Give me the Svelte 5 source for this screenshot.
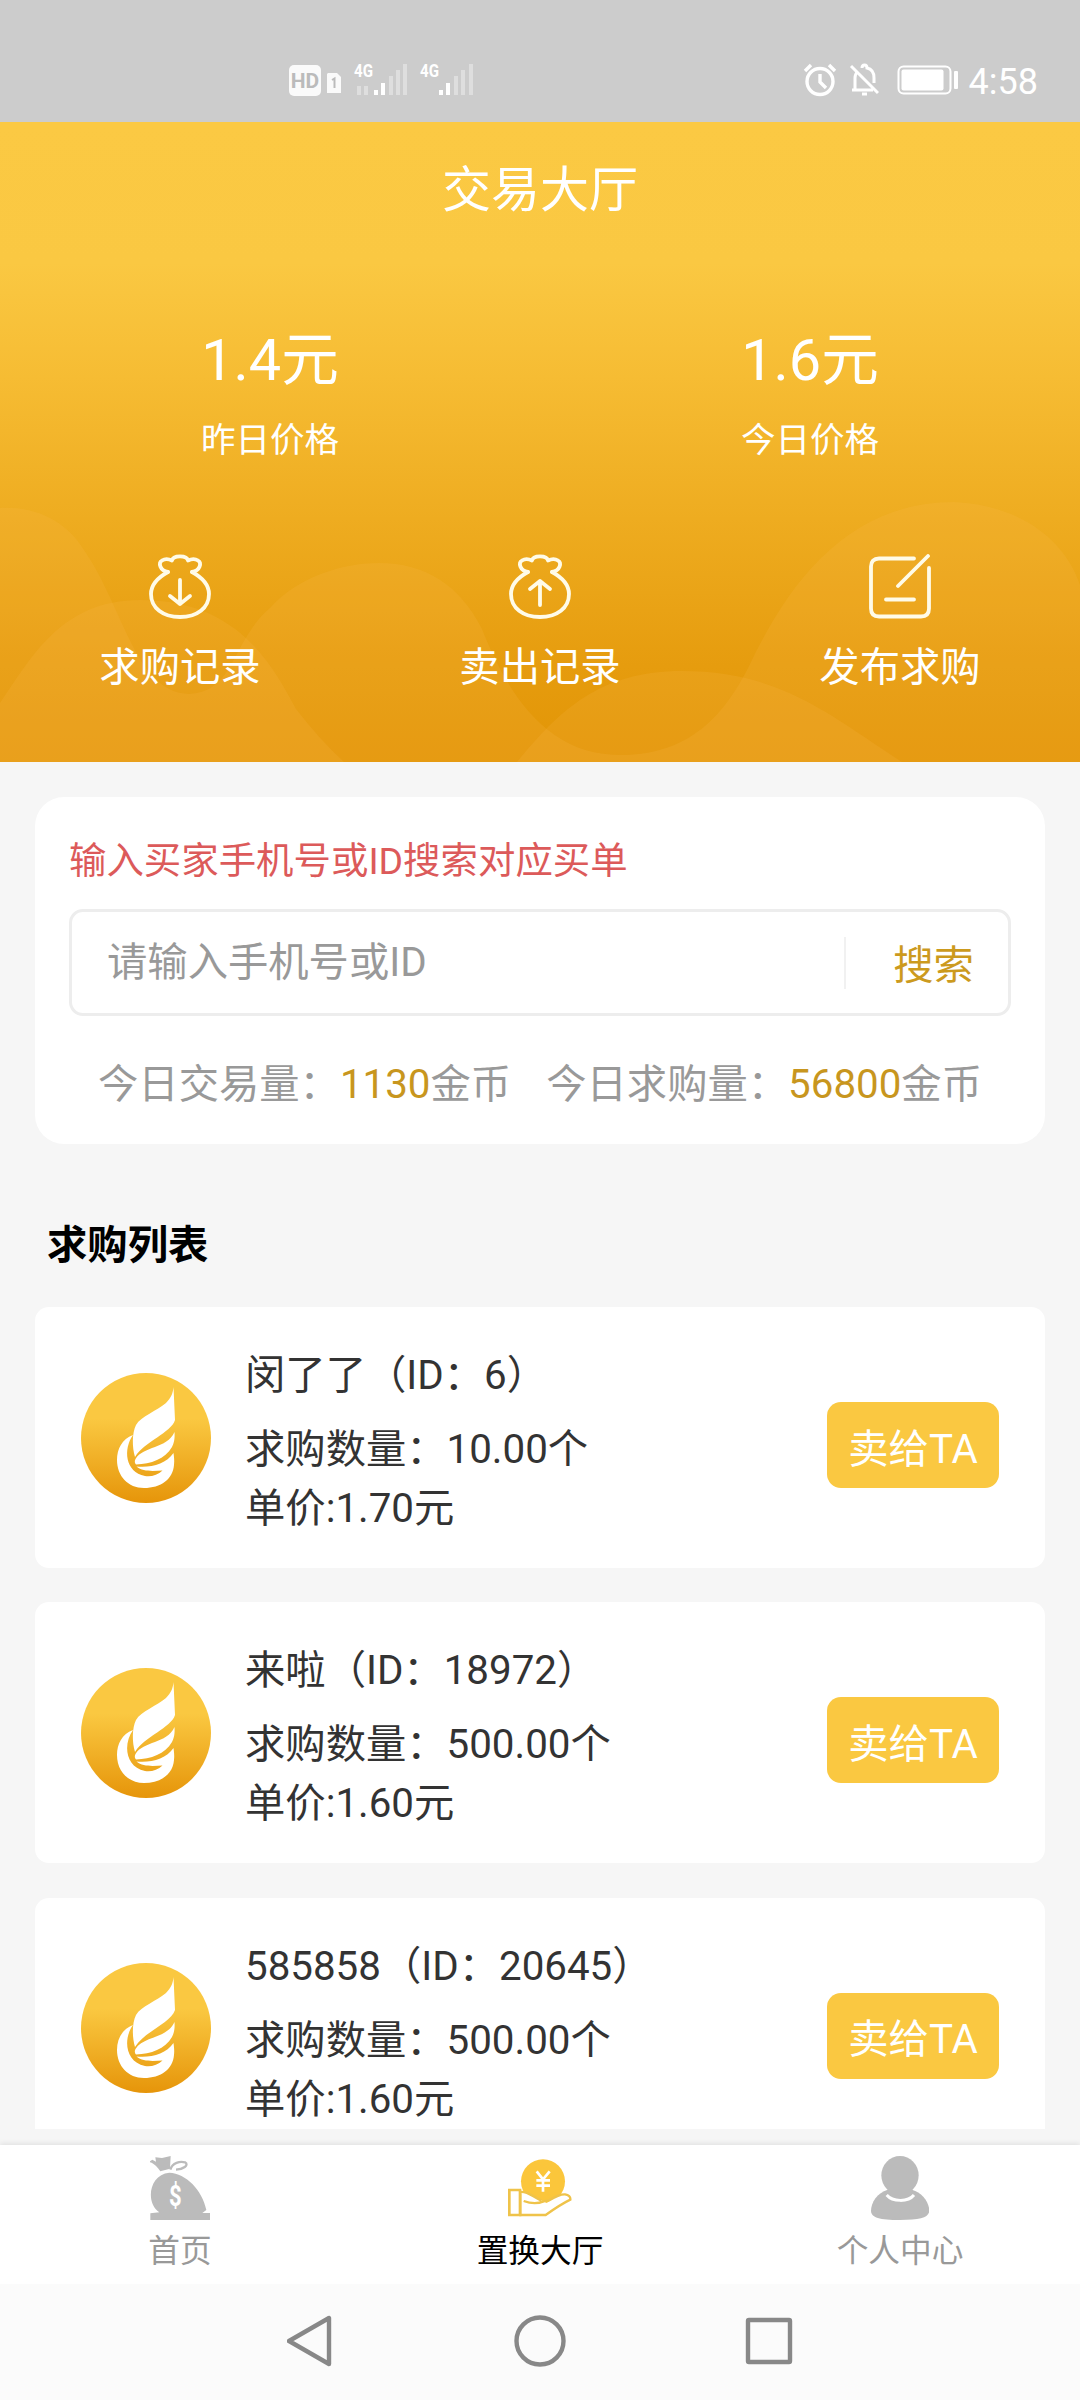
<script>
	const prices = [
		{ value: "1.4元", label: "昨日价格" },
		{ value: "1.6元", label: "今日价格" },
	];

	const actions = [
		{ icon: "buy", label: "求购记录" },
		{ icon: "sell", label: "卖出记录" },
		{ icon: "publish", label: "发布求购" },
	];

	const orders = [
		{ name: "闵了了", id: "6", amount: "10.00", price: "1.70" },
		{ name: "来啦", id: "18972", amount: "500.00", price: "1.60" },
		{ name: "585858", id: "20645", amount: "500.00", price: "1.60" },
	];

	const tabs = [
		{ icon: "home", label: "首页" },
		{ icon: "trade", label: "置换大厅" },
		{ icon: "user", label: "个人中心" },
	];

	let activeTab = "trade";
	let keyword = "";
</script>

<div class="screen">
	<!-- Phone status bar -->
	<div class="status-bar">
		<div class="status-left">
			<span class="hd">HD</span>
			<svg class="sim" width="14" height="20" viewBox="0 0 14 20">
				<path d="M1 0H10L14 4V20H0V1Z" fill="#fafafa" />
				<path d="M5 7L7.500 5.500V15" fill="none" stroke="#bbb" stroke-width="2" />
			</svg>
			<svg class="signal first" width="56" height="40" viewBox="0 -4 56 40">
				<text x="0" y="17" textLength="19" lengthAdjust="spacingAndGlyphs">4G</text>
				<path class="dim" d="M3 26h4v9h-4zM10 26h4v9h-4zM35 16h4v19h-4zM42 10h4v25h-4zM49 4h4v31h-4z" />
				<path class="lit" d="M20 30h4v5h-4zM27 23h4v12h-4z" />
			</svg>
			<svg class="signal" width="56" height="40" viewBox="0 -4 56 40">
				<text x="0" y="17" textLength="19" lengthAdjust="spacingAndGlyphs">4G</text>
				<path class="dim" d="M34 16h4v19h-4zM41 10h4v25h-4zM49 4h4v31h-4z" />
				<path class="lit" d="M19 30h4v5h-4zM26 23h4v12h-4z" />
			</svg>
		</div>
		<div class="status-right">
			<svg width="34" height="34" viewBox="0 0 34 34" fill="none" stroke="#fff" stroke-width="3.400">
				<circle cx="17" cy="18.500" r="13" />
				<path d="M17 11V19L23 25M2 8L8 2M26 2L32 8" />
			</svg>
			<svg width="30" height="34" viewBox="0 0 30 34" fill="none" stroke="#fff" stroke-width="3">
				<path d="M6 27V15C6 12 7 10 9 8M13 5C13 1 18 1 18 5C23 6 25 10 25 15V20M3 27H24M2 3L29 30" />
				<path d="M13 31H18" />
			</svg>
			<svg class="battery" width="62" height="30" viewBox="0 0 62 30">
				<rect x="1.500" y="1.500" width="52" height="27" rx="5" fill="none" stroke="#fff" stroke-width="2" />
				<rect x="4.500" y="4.500" width="42" height="21" rx="2" fill="#fff" />
				<rect x="57" y="6" width="4" height="18" rx="1" fill="#fff" />
			</svg>
			<span class="time">4:58</span>
		</div>
	</div>

	<header>
		<svg class="waves" viewBox="0 122 1080 640" preserveAspectRatio="none">
			<path
				d="M0 508C40 506 68 524 84 550C125 610 135 692 189 694C235 692 232 640 270 608C300 575 345 563 379 563C425 563 460 585 482 629C510 700 550 755 620 755C690 755 725 715 750 664C790 580 850 502 954 502C1020 505 1065 540 1080 585V762H0Z"
			/>
			<path
				d="M0 703C30 660 60 600 140 600C235 600 270 660 296 709Q320 740 344 762H0Z"
			/>
			<path d="M517 762C560 710 600 671 682 671C780 671 830 715 902 762Z" />
		</svg>

		<h1>交易大厅</h1>

		<div class="prices">
			{#each prices as item}
				<div class="price">
					<strong>{item.value}</strong>
					<span>{item.label}</span>
				</div>
			{/each}
		</div>

		<div class="actions">
			{#each actions as action}
				<div class="action">
					<svg
						width="66"
						height="66"
						viewBox="0 0 66 66"
						fill="none"
						stroke="#fffbe8"
						stroke-width="3.800"
						stroke-linecap="round"
						stroke-linejoin="round"
					>
						{#if action.icon === "publish"}
							<path d="M47 4.500H12Q4 4.500 4 12.500V54.500Q4 62.500 12 62.500H54Q62 62.500 62 54.500V14" />
							<path d="M61 2L31 32M19 45.500H47" />
						{:else}
							<path
								d="M21 18C13 17 11 9 15 6.500C18 4.500 22 5 25 6.500C26 1 40 1 41 6.500C44 5 48 4.500 51 6.500C55 9 53 17 45 18"
							/>
							<path d="M21 18C10 24 4 31 4 40C4 54 16 63 33 63C50 63 62 54 62 40C62 31 56 24 45 18" />
							{#if action.icon === "buy"}
								<path d="M33 26V50M23 42L33 50L43 42" />
							{:else}
								<path d="M33 51V27M23 35L33 27L43 35" />
							{/if}
						{/if}
					</svg>
					<span>{action.label}</span>
				</div>
			{/each}
		</div>
	</header>

	<main>
		<!-- Search card -->
		<section class="search-card">
			<p class="hint">输入买家手机号或ID搜索对应买单</p>
			<div class="search-box">
				<input type="text" bind:value={keyword} placeholder="请输入手机号或ID" />
				<button>搜索</button>
			</div>
			<div class="stats">
				<span>今日交易量：<em>1130</em>金币</span>
				<span>今日求购量：<em>56800</em>金币</span>
			</div>
		</section>

		<h2>求购列表</h2>

		<!-- Purchase orders -->
		{#each orders as order}
			<div class="order">
				<svg class="avatar" width="130" height="130" viewBox="0 0 130 130">
					<defs>
						<linearGradient id="gold" x1="0" y1="0" x2="0" y2="1">
							<stop offset="0.350" stop-color="#fac841" />
							<stop offset="1" stop-color="#e6950a" />
						</linearGradient>
					</defs>
					<circle cx="65" cy="65" r="65" fill="url(#gold)" />
					<g fill="#fff">
						<path d="M92.500 14L94 47C90 60 64 68 54 84C51 74 51 60 55 52C60 43 76 38 85 30C90 25 92 20 92.500 14Z" />
						<path d="M93.500 59C94 66 93 70 91 74C84 86 70 91 55 91.500C53.500 90 53.500 88 54.500 86C62 73 86 76 93.500 59Z" />
						<path
							d="M52 62C41 66 36 76 36 87C36 103 47 115 63 115C80 115 92 106 93 92C93.500 87 93 84 92.500 80C85 91 70 95 55.500 93.500C62 99 72 98 81.500 97.500C77 102 70 104 64 103C44 99 42 76 52 62Z"
						/>
					</g>
				</svg>
				<div class="info">
					<p class="name">{order.name}（ID：{order.id}）</p>
					<p>求购数量：{order.amount}个</p>
					<p>单价:{order.price}元</p>
				</div>
				<button class="sell">卖给TA</button>
			</div>
		{/each}
	</main>

	<!-- Bottom tabs -->
	<nav class="tabs">
		{#each tabs as tab}
			<div class="tab" class:active={tab.icon === activeTab}>
				{#if tab.icon === "home"}
					<svg width="60" height="64" viewBox="90 78 180 192">
						<g fill="#bbb">
							<path d="M90 94L97 89L108 95L106 82L126 84L152 78L150 116L121 124C112 112 104 101 90 97Z" />
							<path d="M148 128C198 131 246 178 259 240L247 249H270V270H91V250L118 247C76 220 86 133 148 128Z" />
						</g>
						<path d="M151 119C157 98 180 93 195 97C209 105 188 119 168 119" fill="none" stroke="#bbb" stroke-width="7" />
						<text class="dollar" x="147" y="229" textLength="38" lengthAdjust="spacingAndGlyphs">$</text>
					</svg>
				{:else if tab.icon === "trade"}
					<svg width="64" height="64" viewBox="144 78 192 192">
						<circle cx="249" cy="154" r="66" fill="#fbc63b" />
						<path
							d="M181 186C196 184 206 190 217 197C234 206 255 216 267 213C279 204 299 192 315 193C326 195 332 201 331 209C304 222 281 238 257 255H181Z"
							fill="#fff"
						/>
						<path d="M196 187C212 188 222 201 250 211L267 213L284 203L260 219Z" fill="#fbc63b" />
						<path
							d="M191 213C210 220 232 222 251 214L267 211C279 204 299 192 315 193C326 195 332 201 331 209C304 222 281 238 257 255H181V186C202 183 216 199 244 212"
							fill="none"
							stroke="#efc34a"
							stroke-width="7"
						/>
						<path d="M148 180H180V255H148Z" fill="none" stroke="#efc34a" stroke-width="8" />
						<path d="M230 124L249 148L269 124M249 148V185M229 151H270M229 167H270" fill="none" stroke="#fff" stroke-width="8" />
					</svg>
				{:else}
					<svg width="58" height="64" viewBox="152 78 174 192">
						<g fill="#bbb">
							<path d="M202 179C171 189 152 216 152 243C153 263 177 270 239 270C302 270 326 262 327 242C326 215 305 188 275 179Z" />
							<ellipse cx="239" cy="136" rx="56" ry="58" />
							<path d="M202 170H276V190C260 211 218 211 202 190Z" />
						</g>
						<path d="M199 195C217 216 263 217 281 195" fill="none" stroke="#fff" stroke-width="9" />
					</svg>
				{/if}
				<span>{tab.label}</span>
			</div>
		{/each}
	</nav>

	<!-- Android navigation keys -->
	<div class="system-nav">
		<svg width="506" height="54" viewBox="0 0 506 54" fill="none" stroke="#888" stroke-width="4.400" stroke-linejoin="round">
			<path d="M42 4V50L2 27Z" />
			<circle cx="253" cy="27" r="23.500" />
			<rect x="461" y="6" width="42" height="42" rx="1" />
		</svg>
	</div>
</div>

<style>
	:global(body) {
		margin: 0;
		background: #f6f6f6;
	}

	.screen {
		width: 1080px;
		height: 2400px;
		display: flex;
		flex-direction: column;
		overflow: hidden;
		background: #f6f6f6;
		font-family: Roboto, "Noto Sans CJK SC", sans-serif;
	}

	h1,
	h2,
	p {
		margin: 0;
	}

	button,
	input {
		font-family: inherit;
		border: none;
		padding: 0;
		background: none;
	}

	svg {
		display: block;
		flex: none;
	}

	/* Status bar */
	.status-bar {
		height: 122px;
		flex: none;
		box-sizing: border-box;
		padding: 60px 42px 0 289px;
		display: flex;
		justify-content: space-between;
		background: #ccc;
	}

	.status-left,
	.status-right {
		height: 40px;
		display: flex;
		align-items: center;
	}

	.hd {
		width: 32px;
		height: 31px;
		border-radius: 5px;
		background: #fafafa;
		color: #bbb;
		font-size: 21px;
		font-weight: 700;
		line-height: 32px;
		text-align: center;
	}

	.sim {
		margin: 5px 13px 0 6px;
	}

	.signal {
		margin-top: -8px;
		overflow: visible;
	}

	.signal.first {
		margin-right: 10px;
	}

	.signal text {
		font-size: 19px;
		font-weight: 700;
		fill: #fff;
	}

	.signal .dim {
		fill: #dedede;
	}

	.signal .lit {
		fill: #fff;
	}

	.status-right {
		gap: 12px;
	}

	.battery {
		margin: 0 -2px 0 6px;
	}

	.time {
		color: #fff;
		font-size: 36px;
		line-height: 40px;
		padding-top: 4px;
	}

	/* Header */
	header {
		position: relative;
		height: 640px;
		flex: none;
		color: #fff;
		background: linear-gradient(#fbc943 0%, #fac842 22%, #f6bc33 40%, #eeac20 62%, #e69c0e 85%, #e29506 100%);
	}

	.waves {
		position: absolute;
		inset: 0;
		width: 100%;
		height: 100%;
		fill: rgba(255, 190, 90, 0.14);
	}

	h1 {
		position: relative;
		padding-top: 39px;
		font-size: 48.96px;
		font-weight: 400;
		line-height: 60px;
		text-align: center;
	}

	.prices {
		position: relative;
		display: flex;
		margin-top: 105px;
	}

	.price {
		flex: 1;
		display: flex;
		flex-direction: column;
		align-items: center;
		gap: 21px;
	}

	.price strong {
		font-size: 57.6px;
		font-weight: 400;
		line-height: 70px;
	}

	.price span {
		font-size: 34.56px;
		line-height: 46px;
	}

	.actions {
		position: relative;
		display: flex;
		margin-top: 91px;
	}

	.action {
		flex: 1;
		display: flex;
		flex-direction: column;
		align-items: center;
		gap: 22px;
		font-size: 40.32px;
		line-height: 52px;
	}

	/* Content */
	main {
		height: 1367px;
		flex: none;
		box-sizing: border-box;
		padding: 35px 35px 0;
		overflow: hidden;
	}

	.search-card {
		height: 347px;
		box-sizing: border-box;
		padding: 39px 34px 0;
		border-radius: 29px;
		background: #fff;
	}

	.hint {
		color: #dc5a5a;
		font-size: 37.44px;
		line-height: 50px;
	}

	.search-box {
		height: 107px;
		box-sizing: border-box;
		margin-top: 23px;
		border: 3px solid #ededed;
		border-radius: 14px;
		display: flex;
		align-items: center;
	}

	.search-box input {
		flex: 1;
		min-width: 0;
		height: 52px;
		padding-left: 35px;
		border-right: 2px solid #f1f1f1;
		font-size: 40.32px;
		outline: none;
	}

	.search-box input::placeholder {
		color: #999;
	}

	.search-box button {
		width: 162px;
		padding: 6px 0 0 13px;
		color: #cc9a1e;
		font-size: 40.32px;
		line-height: 52px;
	}

	.stats {
		display: flex;
		justify-content: space-between;
		margin: 43px 29px 0 29px;
		color: #999;
		font-size: 40.32px;
		line-height: 52px;
		white-space: nowrap;
	}

	.stats em {
		font-style: normal;
		color: #c8961e;
	}

	h2 {
		margin: 76px 0 35px 12px;
		color: #000;
		font-size: 40.32px;
		font-weight: 700;
		line-height: 52px;
	}

	.order {
		height: 261px;
		box-sizing: border-box;
		margin-bottom: 34.4px;
		padding: 0 46px;
		border-radius: 14px;
		display: flex;
		align-items: center;
		background: #fff;
	}

	.info {
		flex: 1;
		margin-left: 34px;
		padding-top: 9px;
		color: #333;
		font-size: 40.32px;
		line-height: 59px;
		white-space: nowrap;
	}

	.name {
		margin-bottom: 15px;
	}

	.sell {
		width: 172px;
		height: 86px;
		margin-top: 15px;
		border-radius: 14px;
		background: #fac841;
		color: #fff;
		font-size: 40.32px;
	}

	/* Bottom tabs */
	.tabs {
		height: 139px;
		flex: none;
		margin-top: 16px;
		display: flex;
		background: #fff;
		box-shadow: 0 -2px 5px rgba(0, 0, 0, 0.08);
	}

	.tab {
		flex: 1;
		padding-top: 11px;
		display: flex;
		flex-direction: column;
		align-items: center;
		gap: 11px;
		color: #999;
		font-size: 31.68px;
		line-height: 42px;
	}

	.tab.active {
		color: #000;
	}

	.dollar {
		fill: #fff;
		font-size: 90px;
		font-weight: 700;
	}

	.system-nav {
		flex: 1;
		padding-top: 30px;
		display: flex;
		justify-content: center;
		align-items: flex-start;
		background: #fbfbfb;
	}

	.system-nav svg {
		margin-right: 1px;
	}
</style>
